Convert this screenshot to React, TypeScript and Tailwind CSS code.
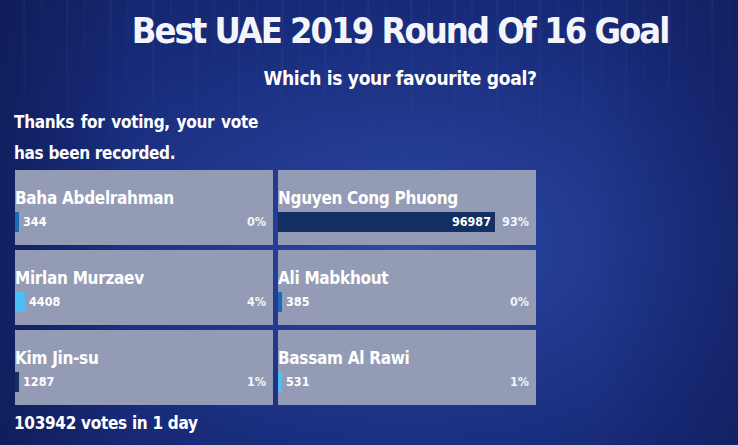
import React from "react";

type Entry = { name: string; votes: number };

const entries: Entry[] = [
  { name: "Baha Abdelrahman", votes: 344 },
  { name: "Nguyen Cong Phuong", votes: 96987 },
  { name: "Mirlan Murzaev", votes: 4408 },
  { name: "Ali Mabkhout", votes: 385 },
  { name: "Kim Jin-su", votes: 1287 },
  { name: "Bassam Al Rawi", votes: 531 },
];

const barColors = ["bg-[#1b6bb8]", "bg-[#142f63]", "bg-[#4cc0f2]"];

const total = entries.reduce((s, e) => s + e.votes, 0);
const TRACK = 233;

function Option({ entry, index }: { entry: Entry; index: number }) {
  const share = entry.votes / total;
  const pct = Math.round(share * 100);
  const width = Math.max(4, Math.round(share * TRACK));
  const inside = width > 60;
  return (
    <div className="flex h-[75px] flex-col bg-[#939bb5] pt-[18px]">
      <div className="text-[17px] leading-[21px] font-bold tracking-[-0.3px] text-white">{entry.name}</div>
      <div className="mt-[3px] flex h-[20px] items-center">
        <div className="flex min-w-0 flex-1 items-center">
          <div
            className={`flex h-[20px] shrink-0 items-center justify-end ${barColors[index % 3]}`}
            style={{ width }}
          >
            {inside && (
              <span className="pr-[4px] text-[12.5px] font-bold text-white">{entry.votes}</span>
            )}
          </div>
          {!inside && (
            <span className="pl-[4px] text-[12.5px] font-bold text-white">{entry.votes}</span>
          )}
        </div>
        <span className="shrink-0 pr-[7px] text-[12.5px] font-bold text-[#f4f5fa]">{pct}%</span>
      </div>
    </div>
  );
}

export default function App() {
  return (
    <div className="relative h-[445px] w-full overflow-hidden bg-[#1a2f80] font-['DejaVu_Sans_Condensed','DejaVu_Sans',sans-serif] text-white">
      {/* stadium glow and rain streaks behind the poll */}
      <div className="pointer-events-none absolute inset-0 bg-[radial-gradient(ellipse_at_55%_55%,#2d4ba3_0%,#21388e_35%,#172a78_70%,#132468_100%)]" />
      <div className="pointer-events-none absolute inset-0 bg-[linear-gradient(90deg,rgba(10,20,70,0.45)_0%,rgba(10,20,70,0)_18%,rgba(10,20,70,0)_80%,rgba(10,20,70,0.3)_100%)]" />
      <div className="pointer-events-none absolute inset-x-0 top-0 h-[170px] bg-[repeating-linear-gradient(90deg,rgba(255,255,255,0)_0px,rgba(255,255,255,0)_23px,rgba(255,255,255,0.06)_24px,rgba(255,255,255,0)_26px,rgba(255,255,255,0)_41px,rgba(255,255,255,0.04)_42px,rgba(255,255,255,0)_43px)] [mask-image:linear-gradient(180deg,black,transparent)]" />

      <div className="relative flex flex-col">
        <div className="flex flex-col items-center pl-[62px]">
          <h1 className="mt-[8px] text-[36px] leading-[46px] font-bold tracking-[-2px] text-[#f4f5fa]">
            Best UAE 2019 Round Of 16 Goal
          </h1>
          <h2 className="mt-[12px] text-[19px] leading-[24px] font-bold tracking-[-0.3px] text-white">
            Which is your favourite goal?
          </h2>
        </div>

        <div className="mt-[17px] flex flex-col pl-[14px]">
          <p className="w-[244px] text-justify text-[17px] leading-[31px] font-bold tracking-[-0.3px] [text-align-last:justify]">
            Thanks for voting, your vote
          </p>
          <p className="text-[17px] leading-[31px] font-bold tracking-[-0.3px]">has been recorded.</p>
          <div className="mt-[1px] ml-[1px] grid w-[521px] grid-cols-2 gap-[5px]">
            {entries.map((e, i) => (
              <Option key={e.name} entry={e} index={i} />
            ))}
          </div>
          <div className="mt-[7px] text-[17px] leading-[22px] font-bold tracking-[-0.3px]">{total} votes in 1 day</div>
        </div>
      </div>
    </div>
  );
}
